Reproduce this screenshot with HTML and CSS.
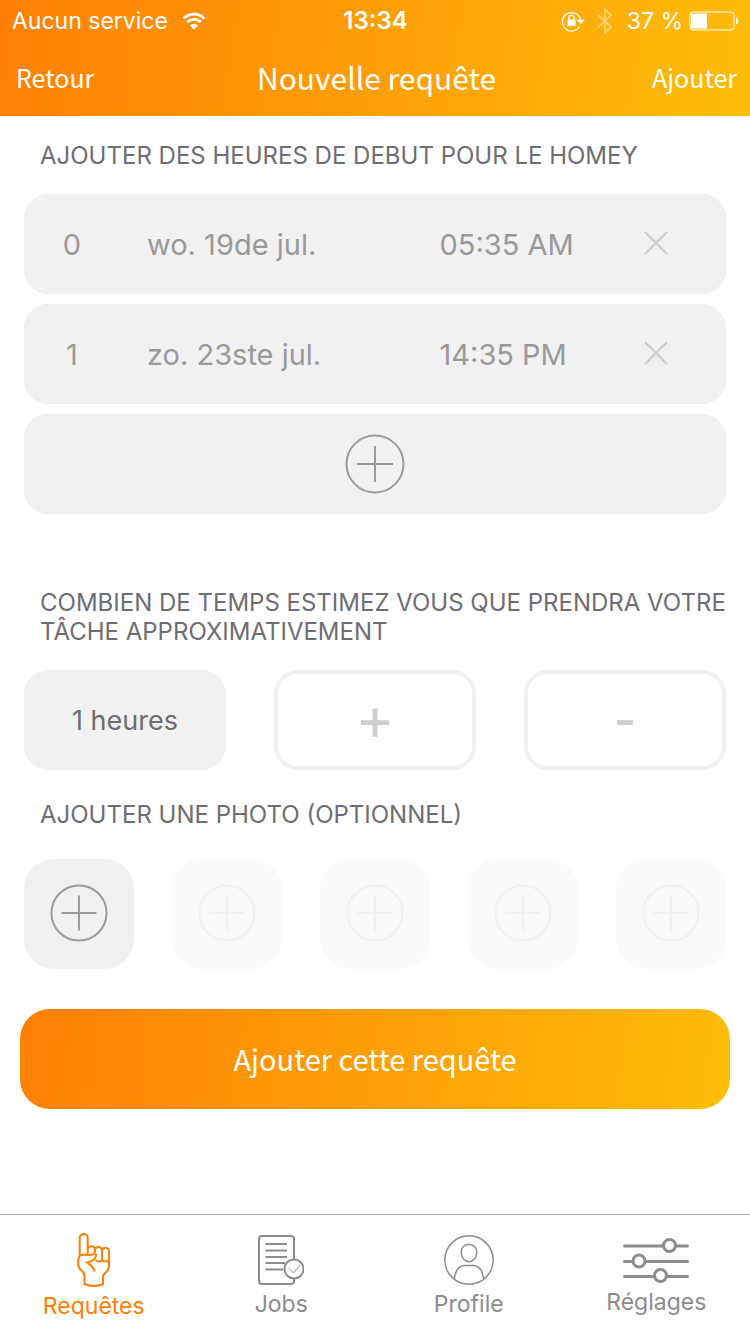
FILE: index.html
```html
<!DOCTYPE html>
<html lang="fr">
<head>
<meta charset="utf-8">
<meta name="viewport" content="width=device-width, initial-scale=1">
<title>Nouvelle requête</title>
<link rel="stylesheet" href="styles.css">
</head>
<body>
<svg class="defs" aria-hidden="true">
  <symbol id="add" viewBox="0 0 60 60"><circle cx="30" cy="30" r="28.500"/><path d="M12 30H48M30 12V48"/></symbol>
  <symbol id="close" viewBox="0 0 24 24"><path d="M1 1L23 23M23 1L1 23"/></symbol>
</svg>

<header class="header">
  <div class="status">
    <div class="status-left">
      <span>Aucun service</span>
      <svg class="wifi" viewBox="0 0 26 20" aria-hidden="true">
        <path class="wave" d="M2 7.200a15.500 15.500 0 0 1 22 0M5.800 11.300a10.200 10.200 0 0 1 14.400 0"/>
        <path class="dot" d="M8.400 14.800a6.500 6.500 0 0 1 9.200 0L13 19.500z"/>
      </svg>
    </div>
    <time class="clock">13:34</time>
    <div class="status-right">
      <svg class="lock" viewBox="0 0 24 22" aria-hidden="true">
        <path class="ring" d="M18.500 16.500A9.200 9.200 0 1 1 19.600 10"/>
        <path class="fill" d="M15.500 9.800H24L19.800 14zM6.500 9.500h8v6.500h-8z"/>
        <path class="shackle" d="M8 10.500V7.800a2.500 2.500 0 0 1 5 0v2.700"/>
      </svg>
      <svg class="bluetooth" viewBox="0 0 16 28" aria-hidden="true"><path d="M1 7.500L14 20L8 25.500V2.500L14 8L1 20.500"/></svg>
      <span>37 %</span>
      <svg class="battery" viewBox="0 0 50 20" aria-hidden="true">
        <rect class="shell" x="1" y="1" width="44" height="18" rx="3"/>
        <rect class="fill" x="2" y="2.500" width="16" height="15" rx="1"/>
        <path class="fill" d="M47 6.500c3 1 3 6 0 7z"/>
      </svg>
    </div>
  </div>
  <div class="nav">
    <button class="nav-button" type="button">Retour</button>
    <h1 class="nav-title">Nouvelle requête</h1>
    <button class="nav-button nav-end" type="button">Ajouter</button>
  </div>
</header>

<main class="main">
  <section class="section times">
    <h2 class="heading">AJOUTER DES HEURES DE DEBUT POUR LE HOMEY</h2>
    <ul class="rows">
      <li class="row">
        <span class="index">0</span><span class="cell">wo. 19de jul.</span><span class="cell">05:35 AM</span>
        <button class="remove" type="button" aria-label="Supprimer"><svg class="close-icon" aria-hidden="true"><use href="#close"/></svg></button>
      </li>
      <li class="row">
        <span class="index">1</span><span class="cell">zo. 23ste jul.</span><span class="cell">14:35 PM</span>
        <button class="remove" type="button" aria-label="Supprimer"><svg class="close-icon" aria-hidden="true"><use href="#close"/></svg></button>
      </li>
      <li><button class="add-row" type="button" aria-label="Ajouter une heure"><svg class="add-icon" aria-hidden="true"><use href="#add"/></svg></button></li>
    </ul>
  </section>

  <section class="section duration">
    <h2 class="heading">COMBIEN DE TEMPS ESTIMEZ VOUS QUE PRENDRA VOTRE TÂCHE APPROXIMATIVEMENT</h2>
    <div class="stepper">
      <output class="hours">1 heures</output>
      <button class="step more" type="button">+</button>
      <button class="step" type="button">-</button>
    </div>
  </section>

  <section class="section photos">
    <h2 class="heading">AJOUTER UNE PHOTO (OPTIONNEL)</h2>
    <div class="tiles">
      <button class="tile" type="button" aria-label="Photo 1"><svg class="add-icon" aria-hidden="true"><use href="#add"/></svg></button>
      <button class="tile" type="button" aria-label="Photo 2" disabled><svg class="add-icon" aria-hidden="true"><use href="#add"/></svg></button>
      <button class="tile" type="button" aria-label="Photo 3" disabled><svg class="add-icon" aria-hidden="true"><use href="#add"/></svg></button>
      <button class="tile" type="button" aria-label="Photo 4" disabled><svg class="add-icon" aria-hidden="true"><use href="#add"/></svg></button>
      <button class="tile" type="button" aria-label="Photo 5" disabled><svg class="add-icon" aria-hidden="true"><use href="#add"/></svg></button>
    </div>
  </section>

  <button class="submit" type="button">Ajouter cette requête</button>
</main>

<nav class="tabs">
  <a class="tab active" href="#requetes">
    <svg class="hand" viewBox="0 0 34 54" aria-hidden="true">
      <path d="M2.700 24V5a4 4 0 0 1 8 0V22M2.700 22.500C.5 27 .8 31 2 34.500C3.500 38 7.500 38 7.500 43v8c5.500 2.400 13 2.400 18.500 0v-8c0-2.500 5.500-3.500 6-9.500V18.500a3.500 3.500 0 0 0-7-.5M2.700 22.500C5 21.300 8 21.500 11 22c3 .3 6-.5 7.500-3M10.700 15.500c1.500-3 6.500-3 7.300.5v3M18 17.500a3.500 3.500 0 0 1 7 0V27c-1 2-5 2-6.200 0M25 27c1.500 2 6 2 7 0M19 21c.5 5.500-3.500 7.500-9 8.500 3.500 2.500 6.500 3 7.500 9"/>
    </svg>
    <span>Requêtes</span>
  </a>
  <a class="tab" href="#jobs">
    <svg class="jobs" viewBox="0 0 46 50" aria-hidden="true">
      <path class="line" d="M36 24V4a3 3 0 0 0-3-3H4a3 3 0 0 0-3 3v42a3 3 0 0 0 3 3h29a3 3 0 0 0 3-3v-2M7.500 9H29M7.500 15.500H29M7.500 22H29M7.500 28H27M7.500 34.500H25"/>
      <circle class="line" cx="36" cy="34" r="9.500"/>
      <path class="thin" d="M31 33.500L35.500 38L42 30"/>
    </svg>
    <span>Jobs</span>
  </a>
  <a class="tab" href="#profile">
    <svg class="profile" viewBox="0 0 50 50" aria-hidden="true">
      <circle cx="25" cy="25" r="24.200"/>
      <path d="M25 9.500c-5 0-7.800 3.300-7.800 8 0 5 3.500 9.200 7.800 9.200s7.800-4.200 7.800-9.200c0-4.700-2.800-8-7.800-8zM10.200 43.500C11.500 38 13 31 20.500 30.500h9C37 31 38.500 38 39.800 43.500"/>
    </svg>
    <span>Profile</span>
  </a>
  <a class="tab" href="#reglages">
    <svg class="sliders" viewBox="0 0 66 48" aria-hidden="true">
      <path d="M1.500 11H40M53 11H64.500M1.500 26.500H10M22.500 26.500H64.500M1.500 41.500H31M44.500 41.500H64.500"/>
      <circle cx="46.500" cy="10.500" r="6"/><circle cx="16" cy="26" r="6"/><circle cx="37.500" cy="40.500" r="6"/>
    </svg>
    <span>Réglages</span>
  </a>
</nav>
</body>
</html>
```
FILE: styles.css
```css
* { box-sizing: border-box; }

body {
  margin: 0;
  min-height: 100vh;
  display: flex;
  flex-direction: column;
  background: #fff;
  font-family: Inter, "Noto Sans", sans-serif;
}

button {
  margin: 0;
  padding: 0;
  border: 0;
  background: none;
  font: inherit;
  color: inherit;
}

svg {
  display: block;
  fill: none;
  stroke: currentColor;
}

.defs {
  position: absolute;
  width: 0;
  height: 0;
}

.header, .submit {
  background: linear-gradient(100deg, #ff8004, #fdbd0a);
  color: #fff;
}

.status {
  display: grid;
  grid-template-columns: 1fr auto 1fr;
  height: 42px;
  padding: 0 11px 0 12px;
  font-size: 23px;
  line-height: 42px;
}

.status-left, .status-right {
  display: flex;
  align-items: center;
  gap: 14px;
}

.status-right {
  justify-content: flex-end;
  gap: 6px;
}

.clock {
  font-size: 24px;
  font-weight: 600;
}

.wifi { width: 24px; height: 20px; }
.wave { stroke-width: 3; }
.dot, .fill { fill: currentColor; stroke: none; }
.lock { width: 24px; height: 22px; margin-right: 6px; }
.ring { stroke-width: 1.3; }
.shackle { stroke-width: 1.5; }
.bluetooth {
  width: 16px;
  height: 28px;
  margin-right: 8px;
  stroke-width: 2;
  opacity: 0.4;
}
.battery { width: 50px; height: 20px; }
.shell { stroke-width: 1; }

.nav {
  display: grid;
  grid-template-columns: 1fr auto 1fr;
  align-items: center;
  height: 74px;
  padding: 0 13px 4px 16px;
  font-family: "Noto Sans CJK JP", "Noto Sans", sans-serif;
}

.nav-button {
  justify-self: start;
  font-size: 25px;
}

.nav-end { justify-self: end; }

.nav-title {
  margin: 0;
  font-size: 30px;
  font-weight: 400;
}

.main {
  flex: 1;
  padding: 25px 24px 40px;
}

.heading {
  margin: 0 0 24px;
  padding-left: 16px;
  color: #6d6d72;
  font-size: 24px;
  font-weight: 400;
  line-height: 29px;
}

.rows {
  display: grid;
  gap: 10px;
  margin: 0;
  padding: 0;
  list-style: none;
}

.row {
  display: grid;
  grid-template-columns: 94px 5fr 3fr 138px;
  align-items: center;
  color: #999;
  font-size: 29px;
}

.row, .add-row {
  width: 100%;
  height: 100px;
  border: 1px solid #eee;
  border-radius: 24px;
  background: #f1f1f1;
}

.index { text-align: center; }
.cell { padding-left: 28px; }

.remove {
  display: grid;
  place-items: center;
  height: 96px;
  padding-bottom: 2px;
  color: #ccc;
}

.close-icon {
  width: 24px;
  height: 24px;
  stroke-width: 2;
}

.add-row, .tile {
  display: grid;
  place-items: center;
  color: #999;
}

.add-icon {
  width: 60px;
  height: 60px;
  stroke-width: 2;
}

.duration { margin-top: 74px; }

.stepper {
  display: grid;
  grid-template-columns: repeat(3, 1fr);
  gap: 48px;
}

.hours, .step {
  display: grid;
  place-items: center;
  height: 100px;
  border: 4px solid #f1f1f1;
  border-radius: 24px;
}

.hours {
  background: #f1f1f1;
  color: #6d6d6d;
  font-size: 27px;
}

.step {
  color: #cfcfd1;
  font-size: 48px;
  font-weight: 600;
  line-height: 60px;
}

.more {
  padding-bottom: 4px;
  font-size: 60px;
  font-weight: 400;
}

.photos { margin-top: 30px; }
.photos .heading { margin-bottom: 30px; }

.tiles {
  display: flex;
  justify-content: space-between;
}

.tile {
  width: 110px;
  height: 110px;
  padding-bottom: 2px;
  border-radius: 30px;
  background: #eff1f1;
}

.tile .add-icon {
  width: 58px;
  height: 58px;
}

.tile:disabled {
  background: #fafafa;
  color: #f0f1f1;
}

.submit {
  display: block;
  width: calc(100% + 8px);
  height: 100px;
  margin: 40px -4px 0;
  padding-bottom: 2px;
  border-radius: 30px;
  font-family: "Noto Sans CJK JP", "Noto Sans", sans-serif;
  font-size: 29px;
}

.tabs {
  display: grid;
  grid-template-columns: repeat(4, 1fr);
  height: 120px;
  border-top: 1px solid #b2b2b2;
  background: #fefefe;
}

.tab {
  display: flex;
  flex-direction: column;
  align-items: center;
  gap: 4px;
  padding-top: 20px;
  color: #8c8c8c;
  font-size: 23px;
  line-height: 30px;
  text-decoration: none;
  stroke-width: 2;
}

.tab.active {
  padding-top: 18px;
  color: #ff8000;
}

.hand { width: 34px; height: 54px; }
.jobs { width: 46px; height: 50px; }
.thin { stroke-width: 1; }
.profile { width: 50px; height: 50px; stroke-width: 1.5; }
.sliders {
  width: 66px;
  height: 48px;
  stroke-width: 3;
  stroke-linecap: round;
}
```
